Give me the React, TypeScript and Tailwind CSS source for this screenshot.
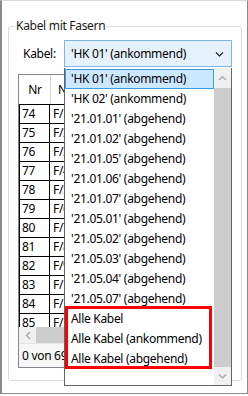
const cables = [
  "'HK 01' (ankommend)",
  "'HK 02' (ankommend)",
  "'21.01.01' (abgehend)",
  "'21.01.02' (abgehend)",
  "'21.01.05' (abgehend)",
  "'21.01.06' (abgehend)",
  "'21.01.07' (abgehend)",
  "'21.05.01' (abgehend)",
  "'21.05.02' (abgehend)",
  "'21.05.03' (abgehend)",
  "'21.05.04' (abgehend)",
  "'21.05.07' (abgehend)",
  'Alle Kabel',
  'Alle Kabel (ankommend)',
  'Alle Kabel (abgehend)',
];

const rows = [74, 75, 76, 77, 78, 79, 80, 81, 82, 83, 84, 85];

const Chevron = ({ dir, color }: { dir: 'up' | 'down' | 'left'; color: string }) => {
  const pts = dir === 'up' ? '1,5 4.5,1.5 8,5' : dir === 'down' ? '1,1.5 4.5,5 8,1.5' : '5,1 1.5,4.5 5,8';
  const w = dir === 'left' ? 6 : 9;
  const h = dir === 'left' ? 9 : 6;
  return (
    <svg width={w} height={h} viewBox={`0 0 ${w} ${h}`}>
      <polyline points={pts} fill="none" stroke={color} strokeWidth="1.2" />
    </svg>
  );
};

const CableDropdown = () => (
  <div className="absolute left-0 top-[28px] w-[168px] h-[318px] bg-white border-l border-r border-b border-[#646464] flex">
    <div className="w-[149px] pt-[1px] flex flex-col">
      {cables.map((c, i) => (
        <div
          key={c}
          className={
            i === 0
              ? 'h-[20px] leading-[18px] pl-[5px] bg-[#cce8ff] border border-[#3f9be0] whitespace-nowrap'
              : 'h-[20px] leading-[20px] pl-[6px] whitespace-nowrap'
          }
        >
          {c}
        </div>
      ))}
    </div>
    {/* vertical scrollbar */}
    <div className="w-[17px] flex flex-col bg-[#f0f0f0]">
      <div className="h-[20px] flex items-center justify-center">
        <Chevron dir="up" color="#a3a3a3" />
      </div>
      <div className="flex-1 bg-[#cdcdcd]" />
      <div className="h-[18px] flex items-center justify-center">
        <Chevron dir="down" color="#a3a3a3" />
      </div>
    </div>
    {/* annotation */}
    <div className="absolute left-0 top-[238px] w-[147px] h-[63px] border-[3px] border-[#ff0000] pointer-events-none" />
  </div>
);

const FiberGrid = () => (
  <div className="ml-[9px] mt-[7px] w-[213px] h-[294px] border border-[#828790] flex flex-col bg-white">
    <div className="h-[29px] flex bg-white">
      <div className="w-[31px] ml-[1px] flex items-center justify-center border-r border-[#d5d5d5]">Nr</div>
      <div className="flex-1 flex items-center pl-[7px]">Name</div>
    </div>
    <div className="h-[223px] overflow-hidden border-t border-black">
      {rows.map((r) => (
        <div key={r} className="h-[19px] flex border-b border-black">
          <div className="w-[31px] border-l border-r border-black pl-[2px] leading-[18px]">{r}</div>
          <div className="flex-1 border-r border-black pl-[3px] leading-[18px] whitespace-nowrap">F/{r - 73}</div>
        </div>
      ))}
    </div>
    {/* horizontal scrollbar */}
    <div className="h-[16px] flex bg-[#f0f0f0]">
      <div className="w-[17px] flex items-center justify-center">
        <Chevron dir="left" color="#a3a3a3" />
      </div>
      <div className="w-[150px] bg-[#cdcdcd]" />
    </div>
    <div className="flex-1 flex items-center pl-[3px] bg-[#f7f7f7] border-t border-[#e3e3e3] whitespace-nowrap">
      0 von 69 Fasern ausgewählt
    </div>
  </div>
);

export default function App() {
  return (
    <div className="w-[248px] h-[396px] bg-white font-['Noto_Sans',sans-serif] text-[12px] tracking-[-0.3px] text-black">
      <div className="w-[248px] h-[394px] border-l-2 border-r border-b border-t border-l-[#8a8a8a] border-r-[#8a8a8a] border-b-[#8a8a8a] border-t-[#dadada]">
        <fieldset className="ml-[6px] mt-[17px] w-[234px] h-[363px] border border-[#dcdcdc] rounded-[3px]">
          <legend className="ml-[6px] px-[1px] leading-[16px] text-[#1a1a1a]">Kabel mit Fasern</legend>
          <div className="mt-[6px] flex items-center pl-[14px]">
            <div className="w-[41px]">Kabel:</div>
            <div className="relative w-[168px] h-[27px] z-10">
              <div className="h-full flex items-center justify-between pl-[6px] pr-[7px] bg-[#e5f1fb] border border-[#7eb4ea] whitespace-nowrap">
                <span>'HK 01' (ankommend)</span>
                <Chevron dir="down" color="#222222" />
              </div>
              <CableDropdown />
            </div>
          </div>
          <FiberGrid />
        </fieldset>
      </div>
    </div>
  );
}
